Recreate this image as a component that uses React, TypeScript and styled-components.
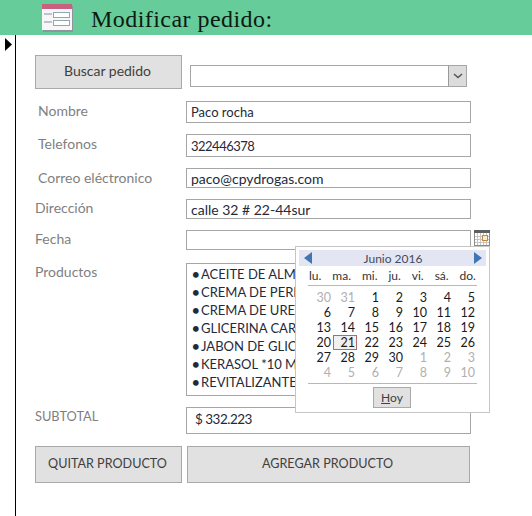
import React from 'react';
import styled, { createGlobalStyle } from 'styled-components';

const GlobalStyle = createGlobalStyle`
  html, body { margin: 0; padding: 0; background: #ffffff; }
  body { font-family: 'Lato', 'Open Sans', sans-serif; }
`;

const Page = styled.div`
  position: relative;
  width: 532px;
  height: 516px;
  overflow: hidden;
  display: flex;
  flex-direction: column;
`;

const TitleBar = styled.header`
  height: 35px;
  flex: none;
  background: #66cc99;
  display: flex;
  align-items: flex-start;
  padding: 4px 0 0 42px;
  box-sizing: border-box;
  gap: 18px;
`;

const Title = styled.h1`
  margin: 0;
  font-family: 'Liberation Serif', serif;
  font-weight: normal;
  font-size: 24px;
  line-height: 31px;
  letter-spacing: 0.45px;
  color: #0c1a12;
`;

const Body = styled.div`
  flex: 1;
  display: flex;
`;

const RecordSelector = styled.div`
  width: 15px;
  flex: none;
  border-right: 1px solid #000000;
  box-sizing: content-box;
  padding-top: 3px;
`;

const Form = styled.main`
  flex: 1;
  padding: 20px 0 0 19px;
  display: flex;
  flex-direction: column;
`;

const ActionButton = styled.button<{ $w: number; $h: number; $size?: number }>`
  width: ${p => p.$w}px;
  height: ${p => p.$h}px;
  box-sizing: border-box;
  flex: none;
  background: #e1e1e1;
  border: 1px solid #a9a9a9;
  font-family: inherit;
  font-size: ${p => p.$size ?? 12.6}px;
  color: #404040;
  padding: 0 2px 3px 0;
`;

const SearchRow = styled.div`
  display: flex;
  align-items: flex-start;
  gap: 8px;
  height: 46px;
`;

const Combo = styled.div`
  margin-top: 10px;
  width: 277px;
  height: 22px;
  box-sizing: border-box;
  border: 1px solid #a6a6a6;
  display: flex;
  justify-content: flex-end;
`;

const ComboArrow = styled.div`
  width: 17px;
  background: #dcdcdc;
  border-left: 1px solid #9a9a9a;
  display: flex;
  align-items: center;
  justify-content: center;
`;

const Row = styled.div<{ $h: number; $gap: number }>`
  display: flex;
  height: ${p => p.$h}px;
  margin-bottom: ${p => p.$gap}px;
`;

const Label = styled.div<{ $indent?: number; $top?: number; $size?: number }>`
  width: 151px;
  flex: none;
  box-sizing: border-box;
  padding-left: ${p => p.$indent ?? 0}px;
  padding-top: ${p => p.$top ?? 0}px;
  font-size: ${p => p.$size ?? 14}px;
  color: #7f7f7f;
`;

const Field = styled.div<{ $size?: number; $spacing?: number; $pad?: number }>`
  width: 285px;
  box-sizing: border-box;
  border: 1px solid #a6a6a6;
  padding: 0 0 ${p => p.$pad ?? 0}px 4px;
  font-size: ${p => p.$size ?? 14}px;
  letter-spacing: ${p => p.$spacing ?? 0}px;
  color: #1f2a3a;
  display: flex;
  align-items: center;
`;

const ProductList = styled.ul`
  width: 285px;
  height: 100%;
  box-sizing: border-box;
  border: 1px solid #a6a6a6;
  margin: 0;
  padding: 1px 0 0 5px;
  list-style: none;
  font-size: 13px;
  line-height: 18px;
  color: #1f2a3a;
  white-space: nowrap;
  overflow: hidden;
`;

const ProductItem = styled.li`
  display: flex;
`;

const Bullet = styled.span`
  width: 9px;
  flex: none;
  font-weight: 700;
`;

const Subtotal = styled(Field)`
  padding-left: 8px;
`;

const ButtonRow = styled.div`
  display: flex;
  gap: 5px;
`;

const CalendarIcon = styled.svg`
  position: absolute;
  left: 474px;
  top: 230px;
`;

const Popup = styled.div`
  position: absolute;
  left: 295px;
  top: 246px;
  width: 195px;
  height: 167px;
  box-sizing: border-box;
  background: #ffffff;
  border: 1px solid #c6c6c6;
  padding: 3px 3px 0;
  display: flex;
  flex-direction: column;
  font-size: 12px;
  color: #1a1a1a;
`;

const MonthBar = styled.div`
  height: 16px;
  flex: none;
  background: #e3e6f2;
  display: flex;
  align-items: center;
  justify-content: space-between;
  padding: 0 4px 0 5px;
  font-size: 12px;
  color: #444c5c;
`;

const WeekRow = styled.div`
  height: 19px;
  flex: none;
  margin-left: 10px;
  width: 167px;
  display: flex;
  justify-content: space-between;
  line-height: 19px;
  font-size: 12px;
  color: #333333;
`;

const Rule = styled.div<{ $top?: number }>`
  height: 1px;
  flex: none;
  margin: ${p => p.$top ?? 0}px 9px 0 9px;
  background: #b8b8b8;
`;

const DayGrid = styled.div`
  display: grid;
  grid-template-columns: repeat(7, 24px);
  grid-auto-rows: 15px;
  margin: 4px 0 0 10px;
  width: 168px;
`;

const DayCell = styled.div<{ $muted?: boolean; $today?: boolean }>`
  text-align: right;
  padding-right: 2px;
  line-height: 15px;
  font-size: 12.5px;
  color: ${p => (p.$muted ? '#b0b0b0' : '#1a1a1a')};
  background: ${p => (p.$today ? '#f0f0f0' : 'transparent')};
  box-shadow: ${p => (p.$today ? 'inset 0 0 0 1px #b06a6a' : 'none')};
`;

const TodayWrap = styled.div`
  display: flex;
  justify-content: center;
  margin: 3px 1px 0 0;
`;

const TodayButton = styled.button`
  width: 38px;
  height: 21px;
  box-sizing: border-box;
  background: #e1e1e1;
  border: 1px solid #a9a9a9;
  padding: 0;
  font-family: inherit;
  font-size: 12px;
  color: #404040;
`;

const products = [
  'ACEITE DE ALMENDRAS',
  'CREMA DE PERLAS',
  'CREMA DE UREA',
  'GLICERINA CARBONATADA',
  'JABON DE GLICERINA',
  'KERASOL *10 ML',
  'REVITALIZANTE',
];

const weekDays = ['lu.', 'ma.', 'mi.', 'ju.', 'vi.', 'sá.', 'do.'];

const days: Array<[number, boolean]> = [
  [30, true], [31, true],
  ...Array.from({ length: 30 }, (_, i): [number, boolean] => [i + 1, false]),
  ...Array.from({ length: 10 }, (_, i): [number, boolean] => [i + 1, true]),
];

const FormIcon = () => (
  <svg width="31" height="28" viewBox="0 0 31 28">
    <rect x="1" y="2" width="30" height="26" fill="#8f95a0" />
    <rect x="0" y="0" width="30" height="26" fill="#f8f6f7" />
    <rect x="0" y="0" width="30" height="5" fill="#c9607f" />
    <path d="M2 10h8M2 18h8" stroke="#a8b4c0" strokeWidth="1.5" />
    <rect x="11.5" y="8.5" width="16" height="5" fill="#fff" stroke="#8fa8b4" />
    <rect x="11.5" y="16.5" width="16" height="5" fill="#fff" stroke="#8fa8b4" />
  </svg>
);

const Arrow = ({ dir }: { dir: 'left' | 'right' }) => (
  <svg width="8" height="12" viewBox="0 0 8 12">
    <path d={dir === 'left' ? 'M8 0v12L0 6z' : 'M0 0v12l8-6z'} fill="#3f76b5" />
  </svg>
);

const App: React.FC = () => (
  <Page>
    <GlobalStyle />
    <TitleBar>
      <FormIcon />
      <Title>Modificar pedido:</Title>
    </TitleBar>
    <Body>
      <RecordSelector>
        <svg width="7" height="13" viewBox="0 0 7 13" style={{ marginLeft: 5, display: 'block' }}>
          <path d="M0 0v13l7-6.5z" fill="#000" />
        </svg>
      </RecordSelector>
      <Form>
        <SearchRow>
          <ActionButton $w={147} $h={34} $size={14}>Buscar pedido</ActionButton>
          <Combo>
            <ComboArrow>
              <svg width="10" height="6" viewBox="0 0 10 6">
                <path d="M1 1l4 3.5L9 1" fill="none" stroke="#555" strokeWidth="1.5" />
              </svg>
            </ComboArrow>
          </Combo>
        </SearchRow>
        <Row $h={22} $gap={11}>
          <Label $indent={3} $top={1}>Nombre</Label>
          <Field $size={13}>Paco rocha</Field>
        </Row>
        <Row $h={23} $gap={11}>
          <Label $indent={3} $top={1}>Telefonos</Label>
          <Field $size={13} $spacing={-0.5}>322446378</Field>
        </Row>
        <Row $h={20} $gap={11}>
          <Label $indent={3} $top={1}>Correo eléctronico</Label>
          <Field>paco@cpydrogas.com</Field>
        </Row>
        <Row $h={20} $gap={11}>
          <Label $top={0}>Dirección</Label>
          <Field>calle 32 # 22-44sur</Field>
        </Row>
        <Row $h={20} $gap={13}>
          <Label $top={0}>Fecha</Label>
          <Field />
        </Row>
        <Row $h={133} $gap={11}>
          <Label $top={0}>Productos</Label>
          <ProductList>
            {products.map(name => (
              <ProductItem key={name}>
                <Bullet>•</Bullet>
                {name}
              </ProductItem>
            ))}
          </ProductList>
        </Row>
        <Row $h={27} $gap={12}>
          <Label $top={1} $size={12.8}>SUBTOTAL</Label>
          <Subtotal $size={13.5} $spacing={-0.5} $pad={3}>$ 332.223</Subtotal>
        </Row>
        <ButtonRow>
          <ActionButton $w={147} $h={37}>QUITAR PRODUCTO</ActionButton>
          <ActionButton $w={283} $h={37}>AGREGAR PRODUCTO</ActionButton>
        </ButtonRow>
      </Form>
    </Body>
    <CalendarIcon width="16" height="16" viewBox="0 0 16 16">
      <rect x="0.5" y="0.5" width="15" height="15" fill="#fff" stroke="#8c8c8c" />
      <path d="M3.5 3v12M6.5 3v12M9.5 3v12M12.5 3v12M1 6.5h14M1 9.5h14M1 12.5h14" stroke="#c4c4c4" />
      <rect x="0" y="0" width="16" height="3" fill="#5f5f5f" />
      <rect x="8.5" y="5.5" width="5" height="5" fill="#f6ead8" stroke="#c8843c" />
    </CalendarIcon>
    <Popup>
      <MonthBar>
        <Arrow dir="left" />
        <span>Junio 2016</span>
        <Arrow dir="right" />
      </MonthBar>
      <WeekRow>
        {weekDays.map(d => (
          <span key={d}>{d}</span>
        ))}
      </WeekRow>
      <Rule />
      <DayGrid>
        {days.map(([n, muted], i) => (
          <DayCell key={i} $muted={muted} $today={!muted && n === 21}>{n}</DayCell>
        ))}
      </DayGrid>
      <Rule $top={3} />
      <TodayWrap>
        <TodayButton><u>H</u>oy</TodayButton>
      </TodayWrap>
    </Popup>
  </Page>
);

export default App;
